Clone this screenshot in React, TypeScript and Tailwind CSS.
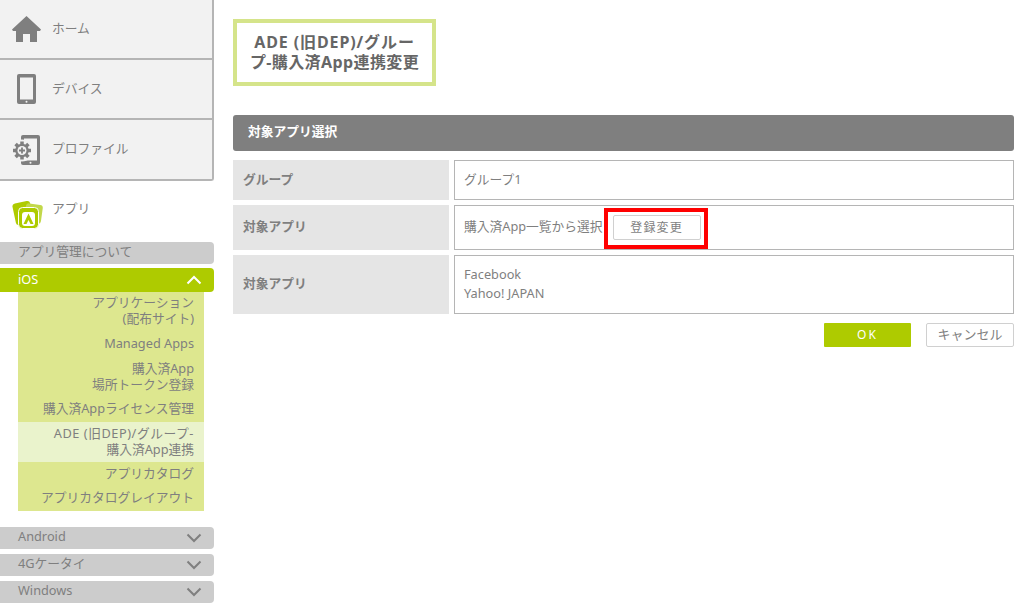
const FONT = '[font-family:"Noto_Sans","Noto_Sans_CJK_JP",sans-serif]';

function Chevron({ up, color }: { up?: boolean; color: string }) {
  return (
    <svg width="16" height="10" viewBox="0 0 16 10" fill="none" stroke={color} strokeWidth="2">
      <path d={up ? 'M1.500 8.500 8 2l6.500 6.500' : 'M1.500 1.500 8 8l6.500-6.500'} />
    </svg>
  );
}

function HomeIcon() {
  return (
    <svg width="29" height="26" viewBox="0 0 29 26" fill="#7f7f7f">
      <path d="M14.500 0 0 13.500l1 1.500h3v11h7v-8h7v8h7V15h3l1-1.500z" />
    </svg>
  );
}

function DeviceIcon() {
  return (
    <svg width="19" height="30" viewBox="0 0 19 30">
      <rect x="0" y="0" width="19" height="30" rx="2" fill="#7f7f7f" />
      <rect x="3" y="3.500" width="13" height="22" fill="#f2f2f2" />
      <circle cx="9.500" cy="27.700" r="1" fill="#f2f2f2" />
    </svg>
  );
}

function ProfileIcon() {
  return (
    <svg width="27" height="30" viewBox="0 0 27 30">
      <rect x="8" y="0" width="19" height="30" rx="2" fill="#7f7f7f" />
      <rect x="11" y="3.500" width="13" height="22" fill="#f2f2f2" />
      <circle cx="17.500" cy="27.700" r="1" fill="#f2f2f2" />
      <circle cx="9" cy="15.500" r="11" fill="#f2f2f2" />
      <path d="M9 6.500v18M0 15.500h18M2.600 9.100l12.800 12.800M15.400 9.100 2.600 21.900" stroke="#7f7f7f" strokeWidth="3.500" />
      <circle cx="9" cy="15.500" r="6.800" fill="#7f7f7f" />
      <circle cx="9" cy="15.500" r="4.500" fill="#f2f2f2" />
      <path d="M9 12.500v6M6 15.500h6" stroke="#7f7f7f" strokeWidth="1.800" />
    </svg>
  );
}

function AppIcon() {
  return (
    <svg width="32" height="30" viewBox="0 0 32 30">
      <rect x="2" y="3" width="18" height="22" rx="3" fill="#aecb00" transform="rotate(-12 11 14)" />
      <rect x="13" y="5" width="17" height="19" rx="3" fill="#c2d84a" transform="rotate(8 21 14)" />
      <rect x="6.500" y="8.500" width="20" height="21" rx="4" fill="#aecb00" stroke="#ffffff" strokeWidth="1" />
      <rect x="10" y="13" width="13" height="14" rx="3" fill="#ffffff" />
      <path d="M16.500 14.500 21.500 25h-3l-2-4-2 4h-3z" fill="#aecb00" />
    </svg>
  );
}

function MainMenu({ label, icon, last }: { label: string; icon: React.ReactNode; last?: boolean }) {
  return (
    <div className={`flex items-center bg-[#f2f2f2] border-r-2 border-[#b5b5b5] ${last ? 'h-[61px] border-b-2 rounded-br-[3px]' : 'h-[60px] border-b-2'}`}>
      <div className="w-[52px] flex justify-center pl-[1px]">{icon}</div>
      <span className="text-[12.75px] text-[#7f7f7f] -mt-[1px]">{label}</span>
    </div>
  );
}

function Accordion({ label, mt }: { label: string; mt: string }) {
  return (
    <div className={`h-[22px] flex items-center justify-between pl-[18px] pr-[12px] bg-[#cccccc] rounded-r-[4px] text-[12.75px] text-[#7f7f7f] ${mt}`}>
      <span className="-mt-[2px]">{label}</span>
      <Chevron color="#7f7f7f" />
    </div>
  );
}

function SubItem({ children, h, active }: { children: React.ReactNode; h: string; active?: boolean }) {
  return (
    <div className={`flex items-center justify-end pr-[10px] text-right text-[12.75px] leading-[16px] text-[#7f7f7f] ${h} ${active ? 'bg-[#eaf3cc] pb-[3px]' : ''}`}>
      <div>{children}</div>
    </div>
  );
}

function Row({ label, h, children }: { label: string; h: string; children: React.ReactNode }) {
  return (
    <div className={`flex gap-[5px] mb-[5px] ${h}`}>
      <div className="w-[216px] bg-[#e5e5e5] flex items-center pl-[10px] pb-[1px] text-[12.75px] font-bold text-[#7f7f7f]">{label}</div>
      <div className="flex-1 border border-[#b5b5b5] flex items-center pl-[9px] pb-[1px] text-[12.75px] text-[#7f7f7f]">{children}</div>
    </div>
  );
}

export default function App() {
  return (
    <div className={`w-[1024px] h-[608px] overflow-hidden bg-white flex ${FONT}`}>
      <aside className="w-[214px] shrink-0">
        <MainMenu label="ホーム" icon={<HomeIcon />} />
        <MainMenu label="デバイス" icon={<DeviceIcon />} />
        <MainMenu label="プロファイル" icon={<ProfileIcon />} last />
        <div className="h-[61px] flex items-center">
          <div className="w-[52px] flex justify-center pt-[4px] pl-[3px]"><AppIcon /></div>
          <span className="text-[12.75px] text-[#7f7f7f] -mt-[6px]">アプリ</span>
        </div>
        <div className="h-[22px] flex items-center pl-[18px] pb-[2px] bg-[#cccccc] rounded-r-[4px] text-[12.75px] text-[#7f7f7f]">アプリ管理について</div>
        <div className="h-[24px] mt-[4px] flex items-center justify-between pl-[18px] pr-[12px] bg-[#aecb00] rounded-r-[4px] text-[12.75px] text-white">
          <span className="-mt-[1px]">iOS</span>
          <Chevron up color="#ffffff" />
        </div>
        <div className="ml-[18px] w-[186px] bg-[#dde78f]">
          <SubItem h="h-[36px]">アプリケーション<br />(配布サイト)</SubItem>
          <SubItem h="h-[30px]">Managed Apps</SubItem>
          <SubItem h="h-[35px]">購入済App<br />場所トークン登録</SubItem>
          <SubItem h="h-[29px]">購入済Appライセンス管理</SubItem>
          <SubItem h="h-[40px]" active><span className="tracking-[0.55px]">ADE (旧DEP)/グループ-</span><br />購入済App連携</SubItem>
          <SubItem h="h-[21px]">アプリカタログ</SubItem>
          <SubItem h="h-[28px]">アプリカタログレイアウト</SubItem>
        </div>
        <Accordion label="Android" mt="mt-[16px]" />
        <Accordion label="4Gケータイ" mt="mt-[5px]" />
        <Accordion label="Windows" mt="mt-[5px]" />
      </aside>

      <main className="flex-1 pl-[19px] pr-[10px] pt-[19px]">
        <div className="w-[203px] h-[67px] border-[4px] border-[#d5e48a] flex items-center justify-center text-center text-[16px] leading-[20px] font-bold text-[#666666] pb-[1px]">
          <div>
            <span className="tracking-[0.9px]">ADE (旧DEP)/グルー</span>
            <br />
            <span className="tracking-[0.4px]">プ-購入済App連携変更</span>
          </div>
        </div>
        <div className="mt-[29px] h-[36px] bg-[#7f7f7f] rounded-[3px] flex items-center pl-[15px] pb-[2px] text-[12.75px] font-bold text-white">対象アプリ選択</div>
        <div className="mt-[9px]">
          <Row label="グループ" h="h-[40px]">グループ1</Row>
          <Row label="対象アプリ" h="h-[45px]">
            <span>購入済App一覧から選択</span>
            <div className="relative ml-[10px] mt-[1px]">
              <button className="block w-[88px] h-[25px] border border-[#d0d0d0] rounded-[2px] bg-white text-[12px] tracking-[1.2px] text-[#7f7f7f]">登録変更</button>
              <div className="absolute -left-[9px] -top-[7px] w-[104px] h-[41px] border-[4px] border-[#ff0000]" />
            </div>
          </Row>
          <Row label="対象アプリ" h="h-[59px]">
            <div className="leading-[19px]">Facebook<br />Yahoo! JAPAN</div>
          </Row>
        </div>
        <div className="mt-[9px] flex justify-end gap-[15px]">
          <button className="w-[87px] h-[24px] rounded-[1px] bg-[#aecb00] text-[12px] tracking-[2px] text-white">OK</button>
          <button className="w-[88px] h-[24px] border border-[#d0d0d0] rounded-[2px] bg-white text-[13px] text-[#7f7f7f]">キャンセル</button>
        </div>
      </main>
    </div>
  );
}
